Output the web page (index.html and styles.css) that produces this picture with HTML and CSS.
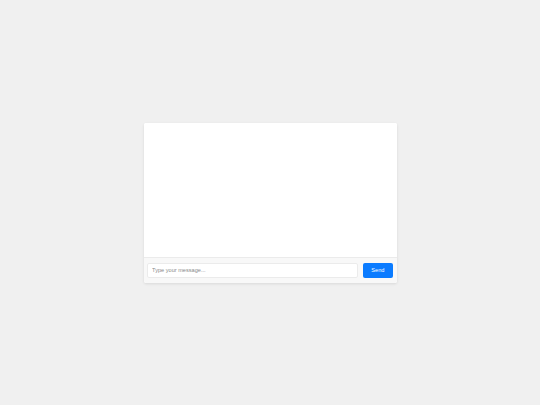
FILE: index.html
```html
<!DOCTYPE html>
<html>
<head>
<meta charset="utf-8">
<link rel="stylesheet" href="styles.css">
</head>
<body>
<div class="chat">
  <div class="messages"></div>
  <div class="composer">
    <input class="field" type="text" placeholder="Type your message...">
    <button class="send">Send</button>
  </div>
</div>
</body>
</html>
```
FILE: styles.css
```css
html, body {
  margin: 0;
  padding: 0;
  height: 100%;
}
body {
  background: #f0f0f0;
  font-family: "Liberation Sans", Arial, sans-serif;
  display: flex;
  align-items: center;
  justify-content: center;
}
.chat {
  width: 253px;
  background: #ffffff;
  border-radius: 2px;
  box-shadow: 0 1px 3px rgba(0, 0, 0, 0.1);
  overflow: hidden;
  display: flex;
  flex-direction: column;
}
.messages {
  height: 134px;
  background: #ffffff;
}
.composer {
  display: flex;
  align-items: center;
  gap: 4.5px;
  padding: 5px 3.4px 4.5px 3.6px;
  background: #f8f8f8;
  border-top: 1px solid #ebebeb;
}
.field {
  flex: 1;
  height: 15px;
  box-sizing: border-box;
  border: 1px solid #ebebeb;
  border-radius: 2px;
  padding: 0 4px;
  font-family: "Liberation Sans", Arial, sans-serif;
  font-size: 5.6px;
  background: #ffffff;
  outline: none;
}
.field::placeholder {
  color: #8a8a8a;
}
.send {
  width: 30.5px;
  height: 15.5px;
  border: none;
  border-radius: 2px;
  background: #0a7bff;
  color: #ffffff;
  font-family: "Liberation Sans", Arial, sans-serif;
  font-size: 5.6px;
  padding: 0;
}
```
